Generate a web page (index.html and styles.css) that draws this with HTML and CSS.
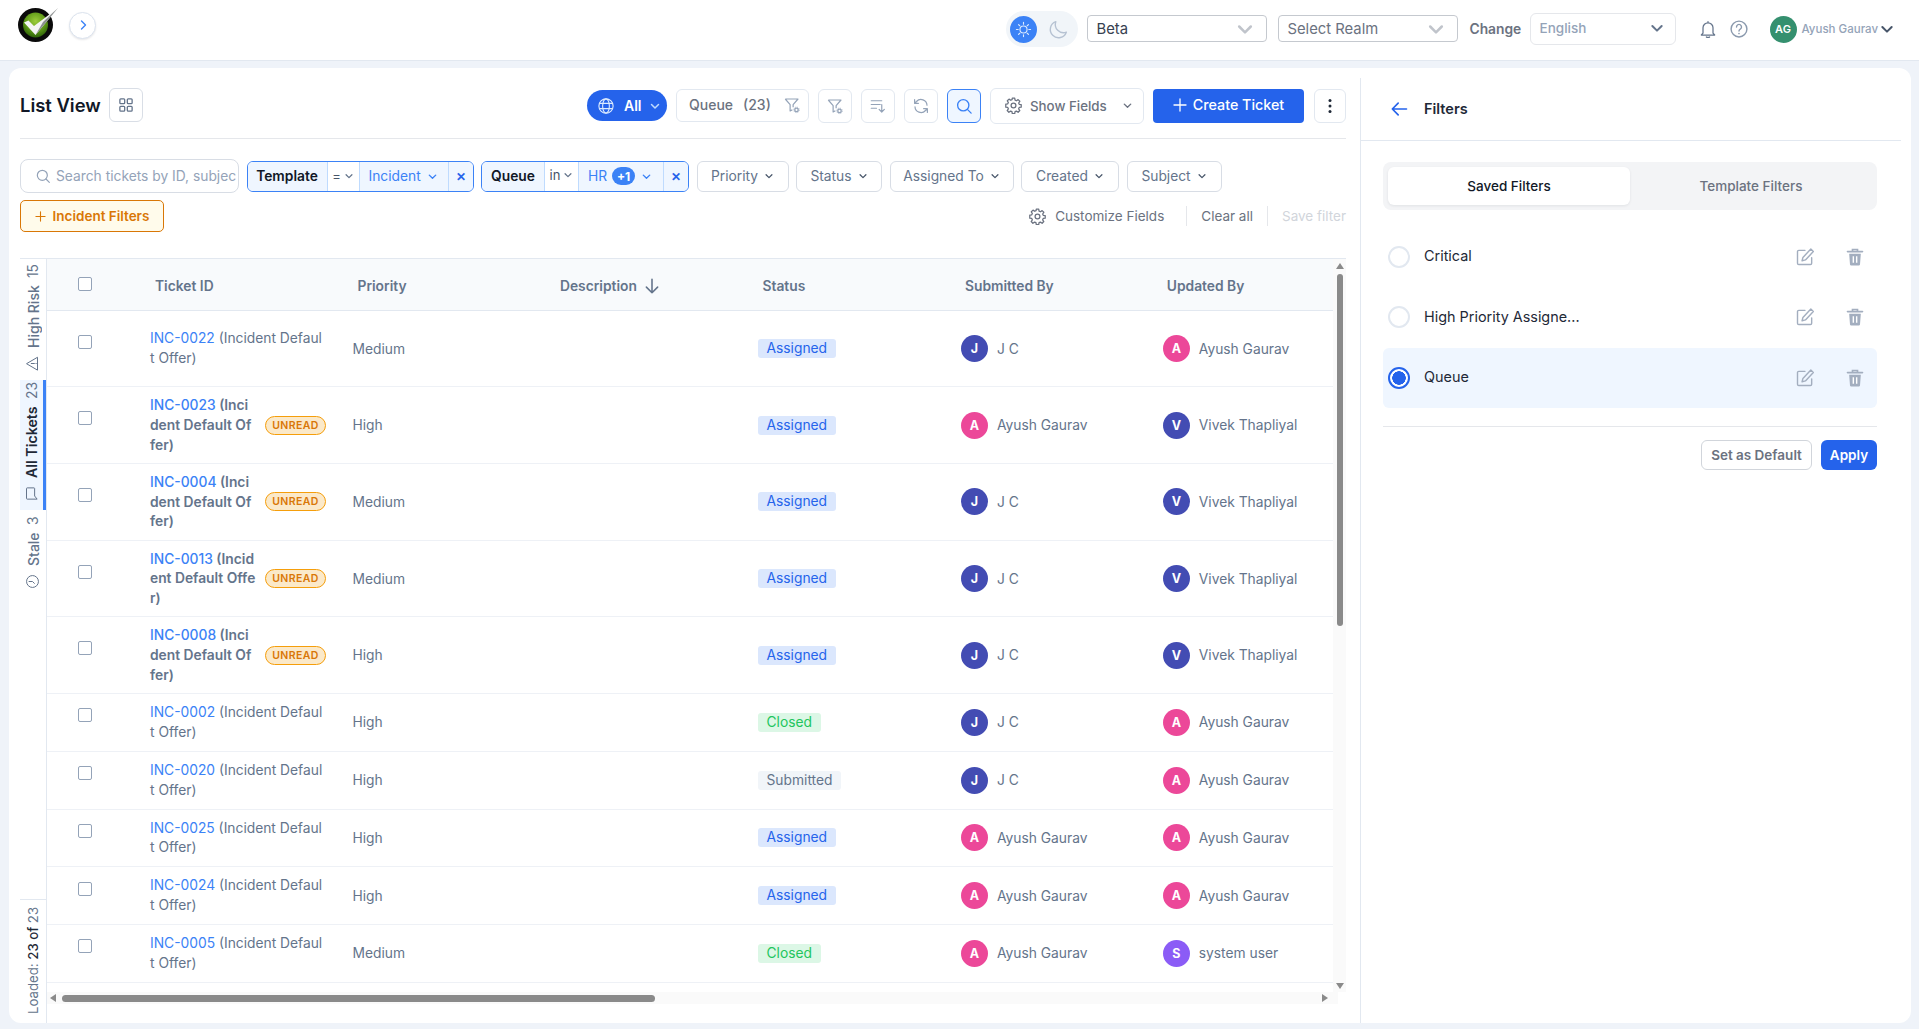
FILE: index.html
```html
<!DOCTYPE html>
<html lang="en">
<head>
<meta charset="utf-8">
<title>List View</title>
<link rel="stylesheet" href="styles.css">
</head>
<body>
<svg class="sprite" width="0" height="0" aria-hidden="true">
  <defs>
    <symbol id="chev" viewBox="0 0 12 12"><path d="M2.5 4.5 6 8l3.5-3.5" fill="none" stroke="currentColor" stroke-width="1.5" stroke-linecap="round" stroke-linejoin="round"/></symbol>
    <symbol id="gear" viewBox="0 0 24 24"><g fill="none" stroke="currentColor" stroke-width="1.8" stroke-linejoin="round"><path d="M10.3 2.5h3.4l.5 2.8 1.9.8 2.4-1.6 2.4 2.4-1.6 2.4.8 1.9 2.8.5v3.4l-2.8.5-.8 1.9 1.6 2.4-2.4 2.4-2.4-1.6-1.9.8-.5 2.8h-3.4l-.5-2.8-1.9-.8-2.4 1.6-2.4-2.4 1.6-2.4-.8-1.9-2.8-.5V11l2.8-.5.8-1.9L3.3 6.200l2.4-2.400 2.400 1.600 1.900-.8z" transform="translate(0 -.8)"/><circle cx="12" cy="12" r="3.4"/></g></symbol>
    <symbol id="filtergear" viewBox="0 0 24 24"><path d="M3 4h17l-6.500 7.500V15M3 4l6.500 7.500V20l3-1.800" fill="none" stroke="currentColor" stroke-width="1.6" stroke-linejoin="round"/><circle cx="18" cy="18.500" r="2.300" fill="none" stroke="currentColor" stroke-width="1.800"/><circle cx="18" cy="18.500" r="3.700" fill="none" stroke="currentColor" stroke-width="1" stroke-dasharray="1.500 1.400"/></symbol>
    <symbol id="edit" viewBox="0 0 24 24"><path d="M20 13v6.500a1.500 1.500 0 0 1-1.500 1.500h-14A1.500 1.500 0 0 1 3 19.500v-14A1.500 1.500 0 0 1 4.500 4H12" fill="none" stroke="currentColor" stroke-width="1.700" stroke-linecap="round"/><path d="M19 2.500 22 5.500 12.500 15.500 8.500 16.500 9.500 12.500z" fill="none" stroke="currentColor" stroke-width="1.700" stroke-linejoin="round"/></symbol>
    <symbol id="trash" viewBox="0 0 24 24"><path d="M3 5.500h18M9 5V3h6v2" fill="none" stroke="currentColor" stroke-width="2" stroke-linecap="round"/><path d="M5 8h14l-1 13a1.500 1.500 0 0 1-1.500 1.300h-9A1.500 1.500 0 0 1 6 21z" fill="currentColor"/><path d="M10 11v8M14 11v8" stroke="#fff" stroke-width="1.700" fill="none"/></symbol>
  </defs>
</svg>

<header class="topbar">
  <svg class="logo" viewBox="0 0 41 34" aria-hidden="true">
    <defs><radialGradient id="lg" cx="50%" cy="35%" r="65%"><stop offset="0" stop-color="#9ccc3c"/><stop offset=".6" stop-color="#5f9a18"/><stop offset="1" stop-color="#2d6208"/></radialGradient></defs>
    <ellipse cx="17.500" cy="17" rx="17.500" ry="17" fill="#0a0a0a"/>
    <circle cx="17.500" cy="17" r="12.500" fill="url(#lg)"/>
    <path d="M6 14.500l4.500-2 5.500 5.500L40 0 17.500 27z" fill="#f4f4f4"/>
    <path d="M17.500 27 40 0 25 14z" fill="#8b8f8f"/>
  </svg>
  <button class="expand" type="button" aria-label="Expand"><svg viewBox="0 0 12 12" width="12" height="12"><path d="M4.500 2 8.500 6l-4 4" fill="none" stroke="#3b82f6" stroke-width="1.400" stroke-linecap="round" stroke-linejoin="round"/></svg></button>

  <div class="theme">
    <span class="sun"><svg viewBox="0 0 24 24" width="17" height="17"><g fill="none" stroke="#dbeafe" stroke-width="1.600" stroke-linecap="round"><circle cx="12" cy="12" r="5"/><path d="M12 2v2.500M12 19.500V22M2 12h2.500M19.500 12H22M5 5l1.700 1.700M17.300 17.300 19 19M5 19l1.700-1.700M17.300 6.700 19 5"/></g></svg></span>
    <svg class="moon" viewBox="0 0 24 24" width="22" height="22"><path d="M20 15.500A9 9 0 0 1 8.500 4a9 9 0 1 0 11.500 11.500z" fill="none" stroke="#b6c2d2" stroke-width="1.500" stroke-linejoin="round"/></svg>
  </div>
  <div class="sel sel-beta"><span>Beta</span><svg width="20" height="20"><use href="#chev"/></svg></div>
  <div class="sel sel-realm"><span>Select Realm</span><svg width="20" height="20"><use href="#chev"/></svg></div>
  <span class="change">Change</span>
  <div class="sel-lang"><span>English</span><svg width="16" height="16"><use href="#chev"/></svg></div>
  <svg class="bell" viewBox="0 0 24 24" width="20" height="20"><path d="M6 17V10.500a6 6 0 0 1 12 0V17l2 2.200H4zM10 21.500c.6.900 3.400.900 4 0M12 3v1.500" fill="none" stroke="#64748b" stroke-width="1.500" stroke-linejoin="round" stroke-linecap="round"/></svg>
  <svg class="help" viewBox="0 0 24 24" width="20" height="20"><circle cx="12" cy="12" r="9.500" fill="none" stroke="#8a99ad" stroke-width="1.700"/><path d="M9 9.500a3 3 0 1 1 4.500 2.600c-1 .6-1.500 1.200-1.500 2.400" fill="none" stroke="#8a99ad" stroke-width="1.700" stroke-linecap="round"/><circle cx="12" cy="17.500" r="1" fill="#8a99ad"/></svg>
  <span class="me-avatar">AG</span>
  <span class="me-name">Ayush Gaurav</span>
  <svg class="me-chev" width="16" height="16"><use href="#chev"/></svg>
</header>

<div class="card">
  <main class="main">
    <div class="titlebar">
      <h1 class="title">List View</h1>
      <button class="icon-btn grid-btn" type="button" aria-label="Grid"><svg viewBox="0 0 16 16" width="14" height="14"><g fill="none" stroke="#64748b" stroke-width="1.500"><rect x="1" y="1" width="5.500" height="5.500" rx="1"/><rect x="9.500" y="1" width="5.500" height="5.500" rx="1"/><rect x="1" y="9.500" width="5.500" height="5.500" rx="1"/><rect x="9.500" y="9.500" width="5.500" height="5.500" rx="1"/></g></svg></button>
      <div class="tools">
        <div class="all-pill">
          <svg viewBox="0 0 24 24" width="18" height="18"><g fill="none" stroke="#dbeafe" stroke-width="1.500"><circle cx="12" cy="12" r="9.500"/><ellipse cx="12" cy="12" rx="4.500" ry="9.500"/><path d="M3 8.500h18M3 15.500h18"/></g></svg>
          <b>All</b>
          <svg width="12" height="12"><use href="#chev"/></svg>
        </div>
        <div class="queue-box"><span>Queue</span><span>(23)</span><svg width="18" height="18"><use href="#filtergear"/></svg></div>
        <button class="icon-btn tool" type="button" aria-label="Filter"><svg width="18" height="18"><use href="#filtergear"/></svg></button>
        <button class="icon-btn tool" type="button" aria-label="Sort"><svg viewBox="0 0 24 24" width="18" height="18"><path d="M3 5h14M3 10h12M3 15h7M17 10v10M13.500 16.500 17 20l3.500-3.500" fill="none" stroke="#94a3b8" stroke-width="1.600" stroke-linecap="round" stroke-linejoin="round"/></svg></button>
        <button class="icon-btn tool" type="button" aria-label="Refresh"><svg viewBox="0 0 24 24" width="18" height="18"><path d="M20 11a8 8 0 0 0-14-5L3.500 8.500M4 13a8 8 0 0 0 14 5l2.500-2.500M3.500 3.500v5h5M20.500 20.500v-5h-5" fill="none" stroke="#94a3b8" stroke-width="1.600" stroke-linecap="round" stroke-linejoin="round"/></svg></button>
        <button class="icon-btn tool tool-on" type="button" aria-label="Search"><svg viewBox="0 0 24 24" width="18" height="18"><circle cx="11" cy="11" r="7.500" fill="none" stroke="#3b82f6" stroke-width="1.800"/><path d="m16.500 16.500 5 5" stroke="#3b82f6" stroke-width="1.800" stroke-linecap="round"/></svg></button>
        <div class="show-fields"><svg width="17" height="17"><use href="#gear"/></svg><span>Show Fields</span><svg width="11" height="11"><use href="#chev"/></svg></div>
        <button class="create" type="button"><svg viewBox="0 0 14 14" width="14" height="14"><path d="M7 1v12M1 7h12" stroke="#fff" stroke-width="1.300" stroke-linecap="round"/></svg>Create Ticket</button>
        <button class="icon-btn more" type="button" aria-label="More"><svg viewBox="0 0 4 16" width="4" height="16"><circle cx="2" cy="2.500" r="1.500" fill="#1f2937"/><circle cx="2" cy="8" r="1.500" fill="#1f2937"/><circle cx="2" cy="13.500" r="1.500" fill="#1f2937"/></svg></button>
      </div>
    </div>

    <div class="filter-row">
      <div class="search">
        <svg viewBox="0 0 24 24" width="16" height="16"><circle cx="11" cy="11" r="7.500" fill="none" stroke="#94a3b8" stroke-width="1.800"/><path d="m16.500 16.500 5 5" stroke="#94a3b8" stroke-width="1.800" stroke-linecap="round"/></svg>
        <span>Search tickets by ID, subject</span>
      </div>
      <div class="chip">
        <span class="c-label c-template">Template</span>
        <span class="c-op c-op-eq">=<svg width="10" height="10"><use href="#chev"/></svg></span>
        <span class="c-val c-incident">Incident<svg width="11" height="11"><use href="#chev"/></svg></span>
        <span class="c-x">✕</span>
      </div>
      <div class="chip">
        <span class="c-label c-queue">Queue</span>
        <span class="c-op c-op-in">in<svg width="10" height="10"><use href="#chev"/></svg></span>
        <span class="c-val c-hr">HR<i class="plus">+1</i><svg width="11" height="11"><use href="#chev"/></svg></span>
        <span class="c-x">✕</span>
      </div>
      <div class="plain p-priority">Priority<svg width="10" height="10"><use href="#chev"/></svg></div>
      <div class="plain p-status">Status<svg width="10" height="10"><use href="#chev"/></svg></div>
      <div class="plain p-assigned">Assigned To<svg width="10" height="10"><use href="#chev"/></svg></div>
      <div class="plain p-created">Created<svg width="10" height="10"><use href="#chev"/></svg></div>
      <div class="plain p-subject">Subject<svg width="10" height="10"><use href="#chev"/></svg></div>
    </div>

    <div class="filter-row2">
      <button class="incident" type="button"><svg viewBox="0 0 12 12" width="11" height="11"><path d="M6 1v10M1 6h10" stroke="#d97706" stroke-width="1.200" stroke-linecap="round"/></svg>Incident Filters</button>
      <div class="filter-links">
        <span class="cust"><svg width="17" height="17"><use href="#gear"/></svg>Customize Fields</span>
        <span class="clear">Clear all</span>
        <span class="save">Save filter</span>
      </div>
    </div>

    <div class="table-area">
      <nav class="rail">
        <div class="rail-item rail-high">
          <svg viewBox="0 0 24 24" width="16" height="16"><path d="M12 3 22 20H2zM12 10v5M12 17.500v.5" fill="none" stroke="#64748b" stroke-width="1.600" stroke-linejoin="round" stroke-linecap="round"/></svg>
          <span>High Risk</span><span class="cnt">15</span>
        </div>
        <div class="rail-item rail-on">
          <svg viewBox="0 0 24 24" width="16" height="16"><path d="M4 4h16a1 1 0 0 1 1 1v11a1 1 0 0 1-1 1H8l-5 4V5a1 1 0 0 1 1-1z" fill="none" stroke="#64748b" stroke-width="1.600" stroke-linejoin="round"/></svg>
          <span>All Tickets</span><span class="cnt">23</span>
        </div>
        <div class="rail-item rail-stale">
          <svg viewBox="0 0 24 24" width="16" height="16"><circle cx="12" cy="12" r="9.500" fill="none" stroke="#64748b" stroke-width="1.600"/><path d="M12 6.500V12l-3 3" fill="none" stroke="#64748b" stroke-width="1.600" stroke-linecap="round" stroke-linejoin="round"/></svg>
          <span>Stale</span><span class="cnt">3</span>
        </div>
        <div class="rail-foot"><span>Loaded: <b>23 of</b> 23</span></div>
      </nav>

      <div class="table-wrap">
        <div class="table-mid">
          <div class="tbl">
            <div class="tr th">
              <div class="td"><i class="cb cb-h"></i></div>
              <div class="td">Ticket ID</div>
              <div class="td">Priority</div>
              <div class="td">Description<svg viewBox="0 0 16 16" width="18" height="18"><path d="M8 2v12M3 9l5 5 5-5" fill="none" stroke="#64748b" stroke-width="1.400" stroke-linecap="round" stroke-linejoin="round"/></svg></div>
              <div class="td">Status</div>
              <div class="td">Submitted By</div>
              <div class="td">Updated By</div>
            </div>

            <div class="tr tall">
              <div class="td"><i class="cb"></i></div>
              <div class="td"><div class="tk"><a>INC-0022</a> (Incident Default Offer)</div></div>
              <div class="td">Medium</div><div class="td"></div>
              <div class="td"><span class="st st-a">Assigned</span></div>
              <div class="td"><span class="av av-i">J</span>J C</div>
              <div class="td"><span class="av av-p">A</span>Ayush Gaurav</div>
            </div>
            <div class="tr tall">
              <div class="td"><i class="cb"></i></div>
              <div class="td"><div class="tk tk-u"><a>INC-0023</a> (Incident Default Offer)</div><span class="unread">UNREAD</span></div>
              <div class="td">High</div><div class="td"></div>
              <div class="td"><span class="st st-a">Assigned</span></div>
              <div class="td"><span class="av av-p">A</span>Ayush Gaurav</div>
              <div class="td"><span class="av av-i">V</span>Vivek Thapliyal</div>
            </div>
            <div class="tr tall">
              <div class="td"><i class="cb"></i></div>
              <div class="td"><div class="tk tk-u"><a>INC-0004</a> (Incident Default Offer)</div><span class="unread">UNREAD</span></div>
              <div class="td">Medium</div><div class="td"></div>
              <div class="td"><span class="st st-a">Assigned</span></div>
              <div class="td"><span class="av av-i">J</span>J C</div>
              <div class="td"><span class="av av-i">V</span>Vivek Thapliyal</div>
            </div>
            <div class="tr tall">
              <div class="td"><i class="cb"></i></div>
              <div class="td"><div class="tk tk-u"><a>INC-0013</a> (Incident Default Offer)</div><span class="unread">UNREAD</span></div>
              <div class="td">Medium</div><div class="td"></div>
              <div class="td"><span class="st st-a">Assigned</span></div>
              <div class="td"><span class="av av-i">J</span>J C</div>
              <div class="td"><span class="av av-i">V</span>Vivek Thapliyal</div>
            </div>
            <div class="tr tall">
              <div class="td"><i class="cb"></i></div>
              <div class="td"><div class="tk tk-u"><a>INC-0008</a> (Incident Default Offer)</div><span class="unread">UNREAD</span></div>
              <div class="td">High</div><div class="td"></div>
              <div class="td"><span class="st st-a">Assigned</span></div>
              <div class="td"><span class="av av-i">J</span>J C</div>
              <div class="td"><span class="av av-i">V</span>Vivek Thapliyal</div>
            </div>
            <div class="tr short">
              <div class="td"><i class="cb"></i></div>
              <div class="td"><div class="tk"><a>INC-0002</a> (Incident Default Offer)</div></div>
              <div class="td">High</div><div class="td"></div>
              <div class="td"><span class="st st-c">Closed</span></div>
              <div class="td"><span class="av av-i">J</span>J C</div>
              <div class="td"><span class="av av-p">A</span>Ayush Gaurav</div>
            </div>
            <div class="tr short">
              <div class="td"><i class="cb"></i></div>
              <div class="td"><div class="tk"><a>INC-0020</a> (Incident Default Offer)</div></div>
              <div class="td">High</div><div class="td"></div>
              <div class="td"><span class="st st-s">Submitted</span></div>
              <div class="td"><span class="av av-i">J</span>J C</div>
              <div class="td"><span class="av av-p">A</span>Ayush Gaurav</div>
            </div>
            <div class="tr short">
              <div class="td"><i class="cb"></i></div>
              <div class="td"><div class="tk"><a>INC-0025</a> (Incident Default Offer)</div></div>
              <div class="td">High</div><div class="td"></div>
              <div class="td"><span class="st st-a">Assigned</span></div>
              <div class="td"><span class="av av-p">A</span>Ayush Gaurav</div>
              <div class="td"><span class="av av-p">A</span>Ayush Gaurav</div>
            </div>
            <div class="tr short">
              <div class="td"><i class="cb"></i></div>
              <div class="td"><div class="tk"><a>INC-0024</a> (Incident Default Offer)</div></div>
              <div class="td">High</div><div class="td"></div>
              <div class="td"><span class="st st-a">Assigned</span></div>
              <div class="td"><span class="av av-p">A</span>Ayush Gaurav</div>
              <div class="td"><span class="av av-p">A</span>Ayush Gaurav</div>
            </div>
            <div class="tr short">
              <div class="td"><i class="cb"></i></div>
              <div class="td"><div class="tk"><a>INC-0005</a> (Incident Default Offer)</div></div>
              <div class="td">Medium</div><div class="td"></div>
              <div class="td"><span class="st st-c">Closed</span></div>
              <div class="td"><span class="av av-p">A</span>Ayush Gaurav</div>
              <div class="td"><span class="av av-v">S</span>system user</div>
            </div>
          </div>
          <div class="vbar">
            <i class="tri tri-up"></i>
            <div class="vtrack"><div class="vthumb"></div></div>
            <i class="tri tri-down"></i>
          </div>
        </div>
        <div class="hbar">
          <i class="tri tri-left"></i>
          <div class="htrack"><div class="hthumb"></div></div>
          <i class="tri tri-right"></i>
        </div>
      </div>
    </div>
  </main>

  <aside class="panel">
    <div class="panel-head">
      <svg viewBox="0 0 24 24" width="20" height="20"><path d="M21 12H4M11 5l-7 7 7 7" fill="none" stroke="#2563eb" stroke-width="2" stroke-linecap="round" stroke-linejoin="round"/></svg>
      <h2>Filters</h2>
    </div>
    <div class="tabs">
      <div class="tab tab-on">Saved Filters</div>
      <div class="tab">Template Filters</div>
    </div>
    <div class="saved">
      <div class="saved-row">
        <i class="radio"></i><span class="saved-name">Critical</span>
        <svg class="act" width="20" height="20"><use href="#edit"/></svg>
        <svg class="act" width="20" height="20"><use href="#trash"/></svg>
      </div>
      <div class="saved-row">
        <i class="radio"></i><span class="saved-name">High Priority Assigne...</span>
        <svg class="act" width="20" height="20"><use href="#edit"/></svg>
        <svg class="act" width="20" height="20"><use href="#trash"/></svg>
      </div>
      <div class="saved-row saved-on">
        <i class="radio radio-on"></i><span class="saved-name">Queue</span>
        <svg class="act" width="20" height="20"><use href="#edit"/></svg>
        <svg class="act" width="20" height="20"><use href="#trash"/></svg>
      </div>
    </div>
    <div class="panel-foot">
      <button class="btn-default" type="button">Set as Default</button>
      <button class="btn-apply" type="button">Apply</button>
    </div>
  </aside>
</div>
</body>
</html>
```

FILE: styles.css
```css
* { box-sizing: border-box; }
html, body { margin: 0; padding: 0; }
body {
  width: 1919px;
  height: 1029px;
  overflow: hidden;
  background: #eff3f9;
  font-family: Inter, "Liberation Sans", sans-serif;
  font-size: 14px;
  color: #64748b;
}
.sprite { position: absolute; }
button { font-family: inherit; cursor: pointer; padding: 0; }
svg { flex: none; display: block; }

/* top bar */
.topbar {
  height: 61px;
  background: #fff;
  border-bottom: 1px solid #e2e8f0;
  display: flex;
  align-items: center;
  padding: 0 24px 0 18px;
}
.logo { width: 41px; height: 34px; margin-top: -10px; }
.expand {
  width: 27px; height: 27px;
  margin-left: 10px;
  margin-top: -10px;
  border-radius: 50%;
  border: 1px solid #dbe3ee;
  background: #fff;
  box-shadow: 0 1px 2px rgba(15, 23, 42, .1);
  display: flex; align-items: center; justify-content: center;
}
.theme {
  margin-left: auto;
  width: 72px; height: 36px;
  border-radius: 18px;
  background: #f1f5f9;
  display: flex; align-items: center;
  padding-left: 4px;
  margin-top: -2px;
}
.sun {
  width: 27px; height: 27px; border-radius: 50%;
  background: #3b82f6;
  display: flex; align-items: center; justify-content: center;
}
.moon { margin-left: 11px; }
.sel {
  width: 180px; height: 27px;
  margin-left: 9px;
  margin-top: -3px;
  border: 1px solid #c5c9cf;
  border-radius: 4px;
  display: flex; align-items: center; justify-content: space-between;
  padding: 0 11px 0 9px;
  color: #374151;
  background: #fff;
  font-size: 14.800px;
}
.sel svg { color: #c0c4cb; }
.sel-realm { margin-left: 11px; color: #6b7280; }
.change { margin-left: 12px; font-weight: 600; font-size: 13.800px; color: #6b7280; width: 60px; margin-top: -2px; white-space: nowrap; }
.sel-lang {
  width: 146px; height: 32px;
  margin-top: -3px;
  border: 1px solid #e5e7eb;
  border-radius: 6px;
  display: flex; align-items: center; justify-content: space-between;
  padding: 0 10px 2px 9px;
  color: #94a3b8;
  font-weight: 500;
  font-size: 13.500px;
}
.sel-lang svg { color: #64748b; }
.bell { margin-left: 22px; margin-top: -2px; }
.help { margin-left: 11px; margin-top: -2px; }
.me-avatar {
  width: 27px; height: 27px; border-radius: 50%;
  background: #35906f;
  color: #fff; font-size: 11px; font-weight: 600;
  display: flex; align-items: center; justify-content: center;
  margin-left: 21px;
  margin-top: -2px;
}
.me-name { margin-left: 5px; font-size: 11.500px; font-weight: 500; color: #94a3b8; margin-top: -2px; white-space: nowrap; }
.me-chev { margin-left: 1px; color: #475569; margin-top: -2px; }

/* card */
.card {
  margin: 7px 8px 0 9px;
  height: 955px;
  background: #fff;
  border-radius: 12px;
  display: flex;
  overflow: hidden;
}
.main {
  width: 1351px;
  flex: none;
  padding: 20px 14px 0 11px;
  display: flex;
  flex-direction: column;
}

.titlebar {
  height: 51px;
  padding-bottom: 15px;
  border-bottom: 1px solid #e5e7eb;
  display: flex;
  align-items: center;
}
.title { margin: -2px 0 0; font-size: 18.400px; font-weight: 600; color: #111827; line-height: 24px; white-space: nowrap; }
.icon-btn {
  background: #fff;
  border: 1px solid #e2e8f0;
  border-radius: 6px;
  display: flex; align-items: center; justify-content: center;
  color: #94a3b8;
}
.grid-btn { width: 34px; height: 34px; margin: -2px 0 0 8px; border-color: #d9dee6; }
.tools { margin-left: auto; display: flex; align-items: center; gap: 9px; }
.all-pill {
  width: 80px; height: 31px;
  border-radius: 16px;
  background: #2563eb;
  color: #dbeafe;
  display: flex; align-items: center;
  padding-left: 10px;
  gap: 9px;
}
.all-pill b { color: #fff; font-weight: 600; }
.all-pill svg:last-child { margin-left: -2px; color: #bfdbfe; }
.queue-box {
  width: 133px; height: 33px;
  border: 1px solid #e2e8f0;
  border-radius: 6px;
  display: flex; align-items: center;
  padding: 0 0 2px 12px;
  gap: 10px;
  font-weight: 500;
  font-size: 14px;
  color: #6b7280;
  white-space: nowrap;
}
.queue-box svg { color: #94a3b8; margin-left: 2px; }
.tool { width: 34px; height: 34px; }
.tool-on { background: #eff6ff; border-color: #3b82f6; }
.show-fields {
  width: 154px; height: 36px;
  border: 1px solid #e2e8f0;
  border-radius: 6px;
  display: flex; align-items: center;
  padding-left: 14px;
  gap: 8px;
  color: #6b7280;
  font-size: 13.300px;
  font-weight: 500;
  white-space: nowrap;
}
.show-fields svg:last-child { margin-left: 7px; }
.create {
  width: 151px; height: 34px;
  background: #2563eb;
  color: #fff;
  border: 0;
  border-radius: 4px;
  padding-bottom: 2px;
  font-size: 14.300px;
  font-weight: 500;
  display: flex; align-items: center; justify-content: center;
  gap: 6px;
}
.more { width: 32px; height: 34px; margin-left: 1px; }

/* filters */
.filter-row {
  margin-top: 20px;
  height: 34px;
  display: flex;
  align-items: center;
  gap: 7.500px;
}
.search {
  width: 219px; height: 34px;
  border: 1px solid #d8dde5;
  border-radius: 8px;
  display: flex; align-items: center;
  padding: 0 2px 0 14px;
  gap: 5px;
  overflow: hidden;
  white-space: nowrap;
  color: #94a3b8;
  font-size: 13.800px;
}
.search span { overflow: hidden; }
.chip {
  height: 31px;
  display: flex;
  border: 1px solid #3b82f6;
  border-radius: 6px;
  overflow: hidden;
  font-size: 14px;
  white-space: nowrap;
}
.c-label { background: #eff6ff; color: #111827; font-weight: 600; display: flex; align-items: center; justify-content: center; font-size: 13.800px; }
.c-template { width: 79px; }
.c-queue { width: 62px; }
.c-op {
  background: #fff;
  border-left: 1px solid #bfdbfe;
  border-right: 1px solid #bfdbfe;
  display: flex; align-items: center; justify-content: center;
  gap: 3px;
  color: #475569;
  font-size: 13px;
}
.c-op svg { color: #64748b; }
.c-op-eq { width: 33px; }
.c-op-in { width: 35px; padding-bottom: 3px; }
.c-val { background: #eff6ff; color: #3b82f6; display: flex; align-items: center; gap: 6px; padding-left: 9px; font-size: 13.800px; }
.c-incident { width: 88px; }
.c-hr { width: 84px; }
.plus {
  font-style: normal;
  font-size: 12px;
  font-weight: 700;
  color: #fff;
  background: #3b82f6;
  width: 23px; height: 18px;
  border-radius: 9px;
  display: flex; align-items: center; justify-content: center;
  margin-left: -1px;
}
.c-x {
  background: #eff6ff;
  border-left: 1px solid #bfdbfe;
  width: 25px;
  color: #2563eb;
  font-weight: 700;
  font-size: 12px;
  display: flex; align-items: center; justify-content: center;
}
.plain {
  height: 31px;
  border: 1px solid #d8dde5;
  border-radius: 6px;
  display: flex; align-items: center;
  justify-content: center;
  gap: 6px;
  font-size: 13.800px;
  color: #64748b;
  white-space: nowrap;
}
.plain svg { color: #475569; }
.p-priority { width: 92px; }
.p-status { width: 86px; }
.p-assigned { width: 124px; }
.p-created { width: 98px; }
.p-subject { width: 95px; }

.filter-row2 {
  margin-top: 7px;
  height: 32px;
  display: flex;
  align-items: center;
  justify-content: space-between;
}
.incident {
  width: 144px; height: 32px;
  background: #fffbeb;
  border: 1px solid #d97706;
  border-radius: 5px;
  color: #d97706;
  font-size: 13.500px;
  font-weight: 600;
  display: flex; align-items: center; justify-content: center;
  gap: 7px;
}
.filter-links { display: flex; align-items: center; font-size: 13.500px; white-space: nowrap; }
.cust { display: flex; align-items: center; gap: 9px; color: #6b7280; padding-right: 22px; }
.clear { color: #6b7280; padding: 2px 14px; border-left: 1px solid #e5e7eb; border-right: 1px solid #e5e7eb; }
.save { color: #d1d5db; padding-left: 14px; }

/* table */
.table-area {
  margin-top: 26px;
  height: 765px;
  border-top: 1px solid #e2e8f0;
  display: flex;
}
.rail {
  width: 27px;
  flex: none;
  border-right: 1px solid #e2e8f0;
  display: flex;
  flex-direction: column;
  font-size: 14px;
  font-weight: 500;
  color: #64748b;
}
.rail-item {
  writing-mode: vertical-rl;
  transform: rotate(180deg);
  display: flex;
  align-items: center;
  flex: none;
  gap: 7.500px;
  padding: 9px 0 9px;
  width: 26px;
  white-space: nowrap;
}
.rail-item svg { transform: rotate(90deg); width: 15px; height: 15px; }
.cnt { font-weight: 400; font-size: 13.800px; }
.rail-high { height: 121px; }
.rail-stale { height: 88px; }
.rail-on {
  background: #eff6ff;
  color: #1f2937;
  font-weight: 600;
  font-size: 14.200px;
  border-left: 3px solid #3b82f6;
  width: 26px;
  height: 130px;
  padding-left: 0;
}
.rail-on .cnt { color: #64748b; }
.rail-foot {
  margin-top: auto;
  height: 124px;
  border-top: 1px solid #e2e8f0;
  display: flex;
  justify-content: center;
  padding-top: 10px;
}
.rail-foot span {
  writing-mode: vertical-rl;
  transform: rotate(180deg);
  white-space: nowrap;
  font-weight: 400;
  font-size: 13.200px;
  height: 104px;
  text-align: left;
}
.rail-foot b { color: #1f2937; font-weight: 500; }

.table-wrap { width: 1299px; flex: none; display: flex; flex-direction: column; }
.table-mid { display: flex; height: 733px; }
.tbl { width: 1286px; flex: none; overflow: hidden; }
.tr {
  display: grid;
  grid-template-columns: 98px repeat(4, 202.500px) 201.800px 176.200px;
  border-bottom: 1px solid #eef1f6;
}
.td { display: flex; align-items: center; padding-left: 5px; min-width: 0; color: #64748b; white-space: nowrap; font-size: 13.800px; }
.tall { height: 76.700px; }
.short { height: 57.700px; }
.th {
  height: 51.700px;
  background: #f8fafc;
  border-bottom-color: #e2e8f0;
}
.th .td { padding: 4px 0 0 10px; font-weight: 600; }
.th svg { margin-left: 6px; }
.th .td:first-child, .tr .td:first-child { padding: 0; justify-content: flex-start; }
.cb {
  width: 14px; height: 14px;
  margin-left: 31px;
  margin-bottom: 14px;
  border: 1.500px solid #94a3b8;
  border-radius: 2px;
  background: #fff;
}
.cb-h { margin-bottom: 0; }
.tk { width: 176px; line-height: 19.600px; padding-top: 1px; white-space: normal; word-break: break-all; flex: none; }
.tk a { color: #3b82f6; }
.tk-u { width: 105.300px; font-weight: 600; }
.tk-u a { font-weight: 500; }
.unread {
  margin-left: 9.700px;
  height: 19px;
  width: 61px;
  flex: none;
  border: 1px solid #f59e0b;
  background: #fbe9c9;
  color: #d97706;
  border-radius: 10px;
  font-size: 10.500px;
  font-weight: 600;
  letter-spacing: .4px;
  display: flex; align-items: center; justify-content: center;
}
.st {
  height: 19px;
  padding: 0 9px;
  border-radius: 3px;
  line-height: 19px;
}
.st-a { background: #dbe7fd; color: #2563eb; }
.st-c { background: #dcf7e6; color: #22c55e; }
.st-s { background: #f1f5f9; color: #64748b; }
.av {
  width: 27px; height: 27px;
  border-radius: 50%;
  flex: none;
  color: #fff;
  font-size: 12.500px;
  font-weight: 700;
  display: flex; align-items: center; justify-content: center;
  margin: 0 9px 0 1px;
}
.av-i { background: #434cb3; }
.av-p { background: #ec4899; }
.av-v { background: #8b5cf6; }

.tri { width: 0; height: 0; display: block; flex: none; border-style: solid; border-color: transparent; }
.tri-up { border-width: 0 4px 6px; border-bottom-color: #8a8a8a; }
.tri-down { border-width: 6px 4px 0; border-top-color: #8a8a8a; }
.tri-left { border-width: 4px 6px 4px 0; border-right-color: #8a8a8a; }
.tri-right { border-width: 4px 0 4px 6px; border-left-color: #8a8a8a; }
.vbar {
  width: 13px;
  flex: none;
  background: #fafafa;
  display: flex;
  flex-direction: column;
  align-items: center;
  padding: 4px 0 3px;
}
.vtrack { flex: 1; width: 100%; padding-top: 5px; display: flex; justify-content: center; }
.vthumb { width: 6px; height: 352px; background: #8a8a8a; border-radius: 3px; }
.hbar {
  height: 12px;
  background: #fafafa;
  display: flex;
  align-items: center;
  padding: 0 10px 0 3px;
  margin-right: 8px;
}
.htrack { flex: 1; padding-left: 6px; }
.hthumb { width: 593px; height: 7px; background: #8a8a8a; border-radius: 4px; }

/* filters panel */
.panel {
  flex: 1;
  margin-top: 10px;
  border-left: 1px solid #e2e8f0;
  display: flex;
  flex-direction: column;
}
.panel-head {
  height: 63px;
  margin-right: 10px;
  border-bottom: 1px solid #e2e8f0;
  display: flex;
  align-items: center;
  padding-left: 28px;
  gap: 15px;
}
.panel-head h2 { margin: 0 0 1px; font-size: 14.500px; font-weight: 600; color: #1f2937; }
.tabs {
  margin: 21px 0 0 22px;
  width: 494px;
  height: 48px;
  padding: 5px;
  background: #f3f4f6;
  border-radius: 8px;
  display: flex;
}
.tab {
  flex: 1;
  display: flex; align-items: center; justify-content: center;
  font-size: 13.500px;
  font-weight: 500;
  color: #6b7280;
  border-radius: 6px;
}
.tab-on { background: #fff; color: #111827; box-shadow: 0 1px 3px rgba(15, 23, 42, .08); }
.saved { margin: 17px 0 0 22px; width: 494px; display: flex; flex-direction: column; gap: 1px; }
.saved-row {
  height: 59.500px;
  display: flex;
  align-items: center;
  padding: 0 12px 0 5px;
  border-radius: 6px;
  color: #6b7280;
}
.saved-on { background: #eff6ff; }
.radio { width: 22px; height: 22px; border-radius: 50%; border: 2px solid #e2e8f0; background: #fff; flex: none; }
.radio-on { border-color: #2563eb; background: radial-gradient(circle, #2563eb 0 6.500px, #fff 7px); }
.saved-name { margin-left: 14px; flex: 1; font-size: 14.400px; color: #1f2937; padding-bottom: 2px; }
.act { color: #a3aebf; }
.act + .act { margin-left: 30px; }
.panel-foot {
  margin: 18.500px 0 0 22px;
  width: 494px;
  border-top: 1px solid #e5e7eb;
  padding-top: 13px;
  display: flex;
  justify-content: flex-end;
  gap: 9px;
}
.btn-default {
  width: 111px; height: 30px;
  background: #fff;
  border: 1px solid #d1d5db;
  border-radius: 6px;
  color: #6b7280;
  font-size: 13.500px;
  font-weight: 600;
}
.btn-apply {
  width: 56px; height: 30px;
  background: #2563eb;
  border: 0;
  border-radius: 6px;
  color: #fff;
  font-size: 13.500px;
  font-weight: 600;
}
```
